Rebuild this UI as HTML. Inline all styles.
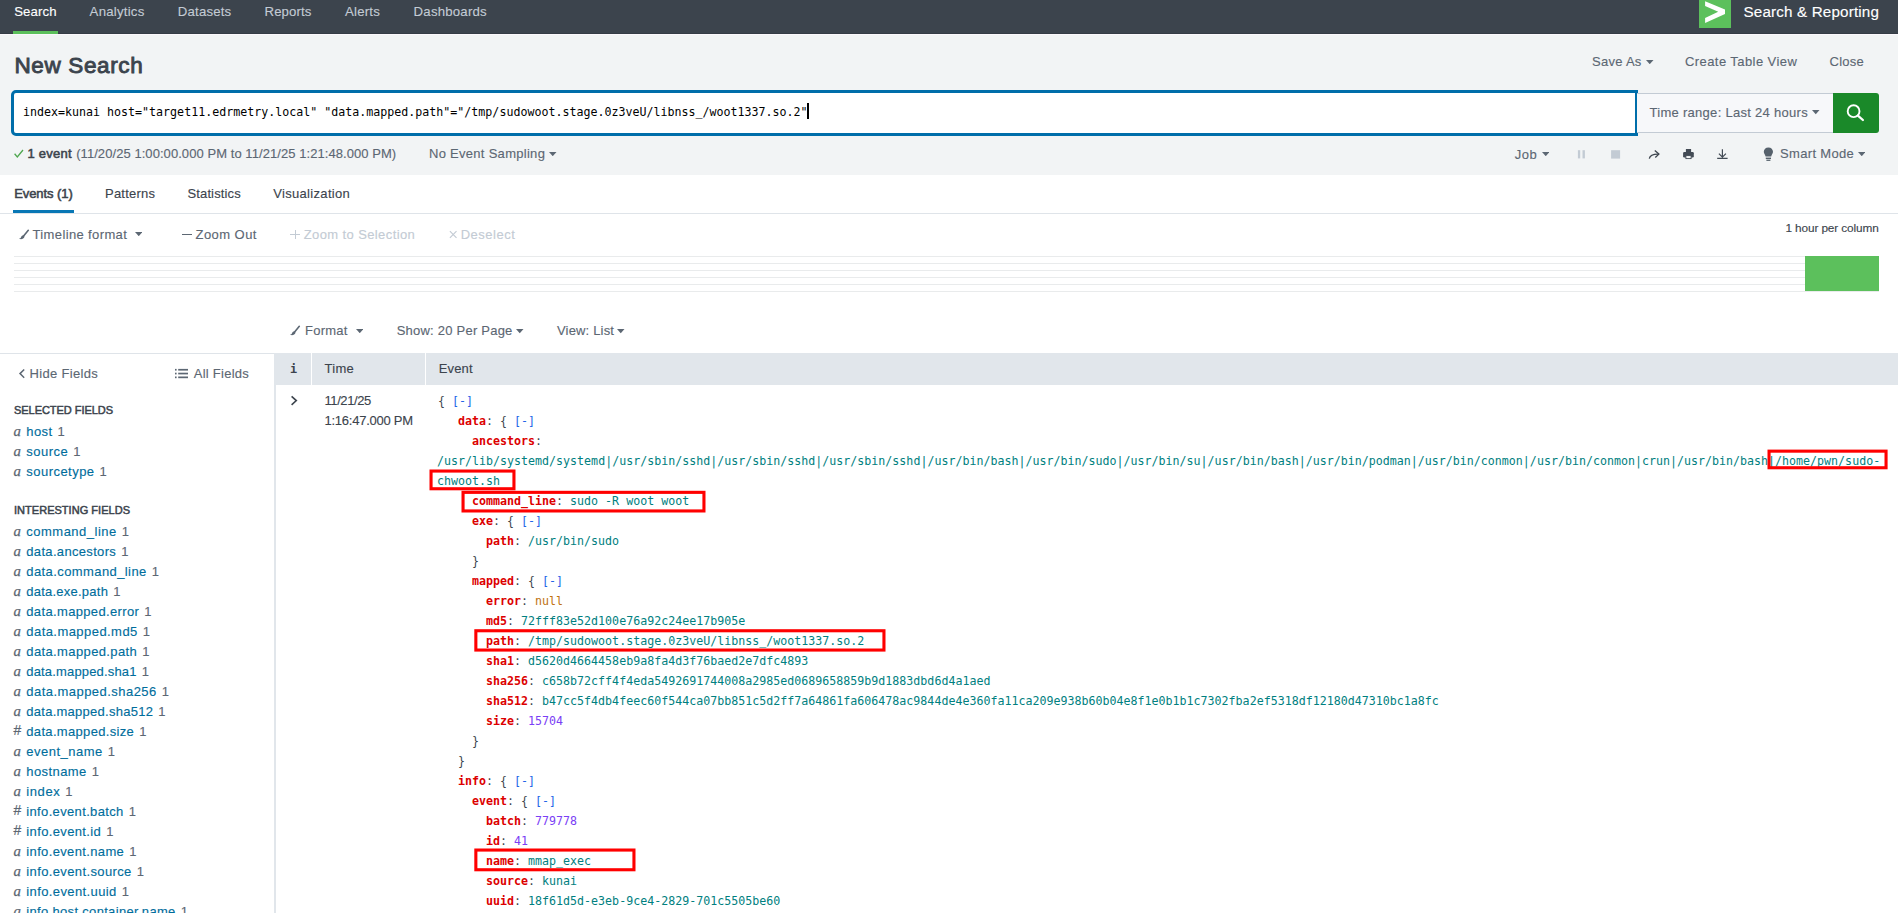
<!DOCTYPE html><html lang="en"><head><meta charset="utf-8"><title>Search | Splunk</title><style>
html,body{margin:0;padding:0}
body{width:1898px;height:913px;overflow:hidden;background:#fff;position:relative;font-family:"Liberation Sans",sans-serif}
.t{position:absolute;white-space:pre;line-height:20px}
.s{font-family:"Liberation Sans",sans-serif;-webkit-text-stroke:0.13px}
.m{font-family:"DejaVu Sans Mono","Liberation Mono",monospace;transform:scaleX(0.9093);transform-origin:0 0}
.f{font-family:"Liberation Serif",serif}
.j{position:absolute;white-space:pre;line-height:20px;font-family:"DejaVu Sans Mono","Liberation Mono",monospace;font-size:12.8px;transform:scaleX(0.9093);transform-origin:0 0}
</style></head><body>
<div style="position:absolute;left:0px;top:0px;width:1898px;height:34px;background:#3c444d"></div>
<div style="position:absolute;left:0px;top:33px;width:1898px;height:1px;background:#353c45"></div>
<div style="position:absolute;left:13px;top:31px;width:45px;height:3px;background:#5cc05c"></div>
<div style="position:absolute;left:1699px;top:0px;width:32px;height:28px;background:#5cc05c"></div>
<svg style="position:absolute;left:1699px;top:0" width="32" height="28"><polygon fill="#fff" points="6.1,1.2 26,9.5 26,14.1 6.1,23 6.1,18.1 19.2,11.8 6.1,6.1"/></svg>
<div style="position:absolute;left:0px;top:34px;width:1898px;height:141px;background:#f2f4f5"></div>
<div style="position:absolute;left:0px;top:34px;width:1898px;height:1px;background:#fbf8fc"></div>
<svg style="position:absolute;left:1646px;top:60.2px" width="7.5" height="4.2"><polygon fill="#5c6773" points="0,0 7.5,0 3.75,4.2"/></svg>
<div style="position:absolute;left:11px;top:90px;width:1627px;height:46px;box-sizing:border-box;border:3px solid #006eaa;border-radius:5px 0 0 5px;background:#fff"></div>
<div style="position:absolute;left:807px;top:103px;width:1.5px;height:16px;background:#000"></div>
<div style="position:absolute;left:1637px;top:93px;width:197px;height:40px;box-sizing:border-box;border:1px solid #c3cbd4;border-left:none;background:#f7f8fa"></div>
<svg style="position:absolute;left:1812px;top:110.4px" width="7.5" height="4.2"><polygon fill="#5c6773" points="0,0 7.5,0 3.75,4.2"/></svg>
<div style="position:absolute;left:1833px;top:93px;width:46.2px;height:40px;background:#1a8929;border-radius:0 3px 3px 0"></div>
<svg style="position:absolute;left:1833px;top:93px" width="47" height="40"><circle cx="20.6" cy="18.2" r="5.9" fill="none" stroke="#fff" stroke-width="1.9"/><path d="M24.9 22.6 L29.9 27" stroke="#fff" stroke-width="2.3" stroke-linecap="round"/></svg>
<svg style="position:absolute;left:14px;top:148px" width="10" height="10"><path d="M0.6 5.8 L3.3 8.9 L9 2" fill="none" stroke="#4fa74f" stroke-width="1.3"/></svg>
<svg style="position:absolute;left:549px;top:151.7px" width="7.5" height="4.2"><polygon fill="#5c6773" points="0,0 7.5,0 3.75,4.2"/></svg>
<svg style="position:absolute;left:1541.5px;top:152.2px" width="7.5" height="4.2"><polygon fill="#5c6773" points="0,0 7.5,0 3.75,4.2"/></svg>
<svg style="position:absolute;left:1577px;top:149px" width="10" height="11"><rect x="0.9" y="1.2" width="2.3" height="8.2" fill="#c3cbd4"/><rect x="5.5" y="1.2" width="2.4" height="8.2" fill="#c3cbd4"/></svg>
<svg style="position:absolute;left:1610px;top:149px" width="12" height="11"><rect x="1.1" y="1.2" width="9" height="8.4" fill="#c3cbd4"/></svg>
<svg style="position:absolute;left:1648px;top:147px" width="14" height="14"><path d="M1.3 11.6 C1.9 8.6 4.2 7 10.4 7.1" fill="none" stroke="#3c444d" stroke-width="1.3"/><path d="M6.8 3.5 L10.9 7.1 L7.3 10.5" fill="none" stroke="#3c444d" stroke-width="1.3"/></svg>
<svg style="position:absolute;left:1683px;top:148px" width="12" height="12"><rect x="2.9" y="1" width="5.2" height="3.4" fill="#434b55"/><rect x="0.1" y="4" width="10.7" height="5.4" rx="1.2" fill="#434b55"/><rect x="2.9" y="7.6" width="5.2" height="3" fill="#f2f4f5" stroke="#434b55" stroke-width="0.9"/></svg>
<svg style="position:absolute;left:1716px;top:148px" width="14" height="13"><path d="M6.4 1.2 V9 M2.9 5.7 L6.4 9.2 L9.9 5.7 M1.2 10.4 H11.6" fill="none" stroke="#434b55" stroke-width="1.2"/></svg>
<svg style="position:absolute;left:1763px;top:147px" width="11" height="15"><path d="M5.4 0.5 C8.2 0.5 10 2.5 10 4.8 C10 6.6 8.6 7.6 8.2 9.6 H2.6 C2.2 7.6 0.8 6.6 0.8 4.8 C0.8 2.5 2.6 0.5 5.4 0.5 Z" fill="#56616c"/><rect x="2.8" y="10.6" width="5.2" height="1.4" fill="#56616c"/><rect x="3.4" y="12.6" width="4" height="1.3" fill="#56616c"/></svg>
<svg style="position:absolute;left:1857.7px;top:151.9px" width="7.5" height="4.2"><polygon fill="#5c6773" points="0,0 7.5,0 3.75,4.2"/></svg>
<div style="position:absolute;left:0px;top:213px;width:1898px;height:1px;background:#dfe4e9"></div>
<div style="position:absolute;left:13px;top:210px;width:61px;height:3px;background:#0877b5"></div>
<svg style="position:absolute;left:18px;top:229px" width="12" height="11"><path d="M10.3 1.3 L5.6 6.9" stroke="#5c6773" stroke-width="1.6" stroke-linecap="round"/><path d="M6.1 6.7 C4.8 5.9 3.4 6.7 3.1 7.9 C2.8 9 2 9.5 0.9 9.7 C2.7 10.5 5 10.3 6 8.8 C6.5 8.1 6.5 7.3 6.1 6.7 Z" fill="#5c6773"/></svg>
<svg style="position:absolute;left:134.7px;top:232px" width="7.5" height="4.2"><polygon fill="#5c6773" points="0,0 7.5,0 3.75,4.2"/></svg>
<div style="position:absolute;left:182px;top:234px;width:9.6px;height:1px;background:#5c6773"></div>
<div style="position:absolute;left:290px;top:234px;width:10px;height:1px;background:#c3cbd4"></div>
<div style="position:absolute;left:295px;top:230px;width:1px;height:9px;background:#c3cbd4"></div>
<svg style="position:absolute;left:449px;top:230px" width="9" height="9"><path d="M0.9 1.2 L7.5 7.8 M7.5 1.2 L0.9 7.8" stroke="#c3cbd4" stroke-width="1.15"/></svg>
<div style="position:absolute;left:14px;top:256px;width:1865px;height:1px;background:#e9ebec"></div>
<div style="position:absolute;left:14px;top:263px;width:1865px;height:1px;background:#e9ebec"></div>
<div style="position:absolute;left:14px;top:270px;width:1865px;height:1px;background:#e9ebec"></div>
<div style="position:absolute;left:14px;top:277px;width:1865px;height:1px;background:#e9ebec"></div>
<div style="position:absolute;left:14px;top:284px;width:1865px;height:1px;background:#e9ebec"></div>
<div style="position:absolute;left:14px;top:291px;width:1865px;height:1px;background:#e9ebec"></div>
<div style="position:absolute;left:1805px;top:256px;width:74px;height:35px;background:#5cc05c"></div>
<svg style="position:absolute;left:289px;top:325px" width="12" height="11"><path d="M10.3 1.3 L5.6 6.9" stroke="#5c6773" stroke-width="1.6" stroke-linecap="round"/><path d="M6.1 6.7 C4.8 5.9 3.4 6.7 3.1 7.9 C2.8 9 2 9.5 0.9 9.7 C2.7 10.5 5 10.3 6 8.8 C6.5 8.1 6.5 7.3 6.1 6.7 Z" fill="#5c6773"/></svg>
<svg style="position:absolute;left:355.5px;top:328.7px" width="7.5" height="4.2"><polygon fill="#5c6773" points="0,0 7.5,0 3.75,4.2"/></svg>
<svg style="position:absolute;left:516px;top:329.4px" width="7.5" height="4.2"><polygon fill="#5c6773" points="0,0 7.5,0 3.75,4.2"/></svg>
<svg style="position:absolute;left:617px;top:329.4px" width="7.5" height="4.2"><polygon fill="#5c6773" points="0,0 7.5,0 3.75,4.2"/></svg>
<div style="position:absolute;left:0px;top:353px;width:275px;height:1px;background:#dfe4e9"></div>
<div style="position:absolute;left:274px;top:353px;width:2px;height:560px;background:#e1e6eb"></div>
<svg style="position:absolute;left:18px;top:368px" width="8" height="11"><path d="M6.2 1.5 L2 5.6 L6.2 9.7" fill="none" stroke="#5c6773" stroke-width="1.5"/></svg>
<svg style="position:absolute;left:175px;top:368px" width="14" height="11"><g fill="#5c6773"><rect x="0" y="0.9" width="1.6" height="1.7"/><rect x="3.2" y="0.9" width="9.8" height="1.7"/><rect x="0" y="4.7" width="1.6" height="1.7"/><rect x="3.2" y="4.7" width="9.8" height="1.7"/><rect x="0" y="8.5" width="1.6" height="1.7"/><rect x="3.2" y="8.5" width="9.8" height="1.7"/></g></svg>
<div style="position:absolute;left:276px;top:353px;width:1622px;height:32px;background:#e1e6eb"></div>
<div style="position:absolute;left:311px;top:353px;width:1px;height:32px;background:#fff"></div>
<div style="position:absolute;left:425px;top:353px;width:1px;height:32px;background:#fff"></div>
<svg style="position:absolute;left:290px;top:395px" width="9" height="11"><path d="M1.6 1.4 L6.3 5.6 L1.6 9.8" fill="none" stroke="#3c444d" stroke-width="1.6"/></svg>
<div class="j" style="left:437.5px;top:391.00px"><span style="color:#3c444d">{ </span><span style="color:#2265e8">[-]</span></div>
<div class="j" style="left:458px;top:411.00px"><span style="color:#dc0000;font-weight:700">data</span><span style="color:#3c444d">: { </span><span style="color:#2265e8">[-]</span></div>
<div class="j" style="left:472px;top:431.00px"><span style="color:#dc0000;font-weight:700">ancestors</span><span style="color:#3c444d">:</span></div>
<div class="j" style="left:437.3px;top:451.00px"><span style="color:#008080">/usr/lib/systemd/systemd|/usr/sbin/sshd|/usr/sbin/sshd|/usr/sbin/sshd|/usr/bin/bash|/usr/bin/sudo|/usr/bin/su|/usr/bin/bash|/usr/bin/podman|/usr/bin/conmon|/usr/bin/conmon|crun|/usr/bin/bash|/home/pwn/sudo-</span></div>
<div class="j" style="left:437.3px;top:471.00px"><span style="color:#008080">chwoot.sh</span></div>
<div class="j" style="left:472px;top:491.00px"><span style="color:#dc0000;font-weight:700">command_line</span><span style="color:#3c444d">: </span><span style="color:#008080">sudo -R woot woot</span></div>
<div class="j" style="left:472px;top:511.00px"><span style="color:#dc0000;font-weight:700">exe</span><span style="color:#3c444d">: { </span><span style="color:#2265e8">[-]</span></div>
<div class="j" style="left:486px;top:531.00px"><span style="color:#dc0000;font-weight:700">path</span><span style="color:#3c444d">: </span><span style="color:#008080">/usr/bin/sudo</span></div>
<div class="j" style="left:472px;top:551.00px"><span style="color:#3c444d">}</span></div>
<div class="j" style="left:472px;top:571.00px"><span style="color:#dc0000;font-weight:700">mapped</span><span style="color:#3c444d">: { </span><span style="color:#2265e8">[-]</span></div>
<div class="j" style="left:486px;top:591.00px"><span style="color:#dc0000;font-weight:700">error</span><span style="color:#3c444d">: </span><span style="color:#c0720f">null</span></div>
<div class="j" style="left:486px;top:611.00px"><span style="color:#dc0000;font-weight:700">md5</span><span style="color:#3c444d">: </span><span style="color:#008080">72fff83e52d100e76a92c24ee17b905e</span></div>
<div class="j" style="left:486px;top:631.00px"><span style="color:#dc0000;font-weight:700">path</span><span style="color:#3c444d">: </span><span style="color:#008080">/tmp/sudowoot.stage.0z3veU/libnss_/woot1337.so.2</span></div>
<div class="j" style="left:486px;top:651.00px"><span style="color:#dc0000;font-weight:700">sha1</span><span style="color:#3c444d">: </span><span style="color:#008080">d5620d4664458eb9a8fa4d3f76baed2e7dfc4893</span></div>
<div class="j" style="left:486px;top:671.00px"><span style="color:#dc0000;font-weight:700">sha256</span><span style="color:#3c444d">: </span><span style="color:#008080">c658b72cff4f4eda5492691744008a2985ed0689658859b9d1883dbd6d4a1aed</span></div>
<div class="j" style="left:486px;top:691.00px"><span style="color:#dc0000;font-weight:700">sha512</span><span style="color:#3c444d">: </span><span style="color:#008080">b47cc5f4db4feec60f544ca07bb851c5d2ff7a64861fa606478ac9844de4e360fa11ca209e938b60b04e8f1e0b1b1c7302fba2ef5318df12180d47310bc1a8fc</span></div>
<div class="j" style="left:486px;top:711.00px"><span style="color:#dc0000;font-weight:700">size</span><span style="color:#3c444d">: </span><span style="color:#7a40f5">15704</span></div>
<div class="j" style="left:472px;top:731.00px"><span style="color:#3c444d">}</span></div>
<div class="j" style="left:458px;top:751.00px"><span style="color:#3c444d">}</span></div>
<div class="j" style="left:458px;top:771.00px"><span style="color:#dc0000;font-weight:700">info</span><span style="color:#3c444d">: { </span><span style="color:#2265e8">[-]</span></div>
<div class="j" style="left:472px;top:791.00px"><span style="color:#dc0000;font-weight:700">event</span><span style="color:#3c444d">: { </span><span style="color:#2265e8">[-]</span></div>
<div class="j" style="left:486px;top:811.00px"><span style="color:#dc0000;font-weight:700">batch</span><span style="color:#3c444d">: </span><span style="color:#7a40f5">779778</span></div>
<div class="j" style="left:486px;top:831.00px"><span style="color:#dc0000;font-weight:700">id</span><span style="color:#3c444d">: </span><span style="color:#7a40f5">41</span></div>
<div class="j" style="left:486px;top:851.00px"><span style="color:#dc0000;font-weight:700">name</span><span style="color:#3c444d">: </span><span style="color:#008080">mmap_exec</span></div>
<div class="j" style="left:486px;top:871.00px"><span style="color:#dc0000;font-weight:700">source</span><span style="color:#3c444d">: </span><span style="color:#008080">kunai</span></div>
<div class="j" style="left:486px;top:891.00px"><span style="color:#dc0000;font-weight:700">uuid</span><span style="color:#3c444d">: </span><span style="color:#008080">18f61d5d-e3eb-9ce4-2829-701c5505be60</span></div>
<svg style="position:absolute;left:0;top:0;overflow:visible" width="1898" height="913"><rect x="1769.05" y="451.15" width="117" height="16.6" fill="none" stroke="#ff0000" stroke-width="3.1"/></svg>
<svg style="position:absolute;left:0;top:0;overflow:visible" width="1898" height="913"><rect x="431.05" y="471.05" width="82.9" height="17.7" fill="none" stroke="#ff0000" stroke-width="3.1"/></svg>
<svg style="position:absolute;left:0;top:0;overflow:visible" width="1898" height="913"><rect x="463.05" y="492.35" width="240.9" height="18.6" fill="none" stroke="#ff0000" stroke-width="3.1"/></svg>
<svg style="position:absolute;left:0;top:0;overflow:visible" width="1898" height="913"><rect x="475.85" y="630.75" width="408.1" height="19.3" fill="none" stroke="#ff0000" stroke-width="3.1"/></svg>
<svg style="position:absolute;left:0;top:0;overflow:visible" width="1898" height="913"><rect x="475.85" y="850.05" width="158.1" height="19.7" fill="none" stroke="#ff0000" stroke-width="3.1"/></svg>
<span class="t s" style="left:14.2px;top:1.83px;font-size:13.2px;color:#ffffff;letter-spacing:0.110px">Search</span>
<span class="t s" style="left:89.6px;top:1.83px;font-size:13.2px;color:#c3cbd4;letter-spacing:0.238px">Analytics</span>
<span class="t s" style="left:177.8px;top:1.83px;font-size:13.2px;color:#c3cbd4;letter-spacing:0.194px">Datasets</span>
<span class="t s" style="left:264.5px;top:1.83px;font-size:13.2px;color:#c3cbd4;letter-spacing:0.110px">Reports</span>
<span class="t s" style="left:345.1px;top:1.83px;font-size:13.2px;color:#c3cbd4;letter-spacing:0.197px">Alerts</span>
<span class="t s" style="left:413.6px;top:1.83px;font-size:13.2px;color:#c3cbd4;letter-spacing:0.220px">Dashboards</span>
<span class="t s" style="left:1743.5px;top:1.73px;font-size:15.2px;color:#ffffff;letter-spacing:0.169px">Search &amp; Reporting</span>
<span class="t s" style="left:14.5px;top:56.00px;font-size:22.5px;color:#3c444d;letter-spacing:0.625px;-webkit-text-stroke:0.9px #3c444d">New Search</span>
<span class="t s" style="left:1592px;top:52.10px;font-size:13px;color:#5c6773;letter-spacing:0.276px">Save As</span>
<span class="t s" style="left:1685px;top:52.10px;font-size:13px;color:#5c6773;letter-spacing:0.422px">Create Table View</span>
<span class="t s" style="left:1829.5px;top:52.10px;font-size:13px;color:#5c6773;letter-spacing:0.278px">Close</span>
<span class="t m" style="left:23px;top:102.00px;font-size:12.8px;color:#000000">index=kunai host=&quot;target11.edrmetry.local&quot; &quot;data.mapped.path&quot;=&quot;/tmp/sudowoot.stage.0z3veU/libnss_/woot1337.so.2&quot;</span>
<span class="t s" style="left:1649.5px;top:102.50px;font-size:13px;color:#5c6773;letter-spacing:0.287px">Time range: Last 24 hours</span>
<span class="t s" style="left:27.5px;top:143.50px;font-size:13px;color:#3c444d;letter-spacing:0.238px;-webkit-text-stroke:0.55px">1 event</span>
<span class="t s" style="left:76.2px;top:143.50px;font-size:13px;color:#5c6773;letter-spacing:0.062px">(11/20/25 1:00:00.000 PM to 11/21/25 1:21:48.000 PM)</span>
<span class="t s" style="left:429px;top:143.50px;font-size:13px;color:#5c6773;letter-spacing:0.286px">No Event Sampling</span>
<span class="t s" style="left:1514.7px;top:144.90px;font-size:13px;color:#5c6773;letter-spacing:0.533px">Job</span>
<span class="t s" style="left:1780px;top:143.70px;font-size:13px;color:#5c6773;letter-spacing:0.336px">Smart Mode</span>
<span class="t s" style="left:14.2px;top:183.80px;font-size:13px;color:#3c444d;letter-spacing:-0.079px;-webkit-text-stroke:0.55px">Events (1)</span>
<span class="t s" style="left:105px;top:183.80px;font-size:13px;color:#3c444d;letter-spacing:0.210px">Patterns</span>
<span class="t s" style="left:187.5px;top:183.80px;font-size:13px;color:#3c444d;letter-spacing:0.125px">Statistics</span>
<span class="t s" style="left:273.2px;top:183.80px;font-size:13px;color:#3c444d;letter-spacing:0.323px">Visualization</span>
<span class="t s" style="left:32.5px;top:224.70px;font-size:13px;color:#5c6773;letter-spacing:0.372px">Timeline format</span>
<span class="t s" style="left:195.5px;top:224.70px;font-size:13px;color:#5c6773;letter-spacing:0.454px">Zoom Out</span>
<span class="t s" style="left:303.7px;top:224.70px;font-size:13px;color:#c3cbd4;letter-spacing:0.395px">Zoom to Selection</span>
<span class="t s" style="left:460.7px;top:224.70px;font-size:13px;color:#c3cbd4;letter-spacing:0.496px">Deselect</span>
<span class="t s" style="left:1785.4px;top:217.51px;font-size:11.8px;color:#3c444d;letter-spacing:-0.103px">1 hour per column</span>
<span class="t s" style="left:305px;top:320.70px;font-size:13px;color:#5c6773;letter-spacing:0.241px">Format</span>
<span class="t s" style="left:396.7px;top:320.70px;font-size:13px;color:#5c6773;letter-spacing:0.228px">Show: 20 Per Page</span>
<span class="t s" style="left:557px;top:320.70px;font-size:13px;color:#5c6773;letter-spacing:0.168px">View: List</span>
<span class="t s" style="left:29.5px;top:363.70px;font-size:13px;color:#5c6773;letter-spacing:0.330px">Hide Fields</span>
<span class="t s" style="left:193.7px;top:363.70px;font-size:13px;color:#5c6773;letter-spacing:0.268px">All Fields</span>
<span class="t s" style="left:14px;top:400.19px;font-size:11px;color:#3c444d;letter-spacing:-0.044px;-webkit-text-stroke:0.5px">SELECTED FIELDS</span>
<span class="t s" style="left:14px;top:500.19px;font-size:11px;color:#3c444d;letter-spacing:0.027px;-webkit-text-stroke:0.5px">INTERESTING FIELDS</span>
<span class="t f" style="left:13.6px;top:421.00px;font-size:14.8px;color:#5c6773;font-style:italic;-webkit-text-stroke:0.25px">a</span>
<span class="t s" style="left:26.3px;top:421.50px;font-size:13px;color:#006d9c;letter-spacing:0.406px">host</span>
<span class="t s" style="left:57.6px;top:421.50px;font-size:13px;color:#5c6773">1</span>
<span class="t f" style="left:13.6px;top:441.00px;font-size:14.8px;color:#5c6773;font-style:italic;-webkit-text-stroke:0.25px">a</span>
<span class="t s" style="left:26.3px;top:441.50px;font-size:13px;color:#006d9c;letter-spacing:0.485px">source</span>
<span class="t s" style="left:73.3px;top:441.50px;font-size:13px;color:#5c6773">1</span>
<span class="t f" style="left:13.6px;top:461.00px;font-size:14.8px;color:#5c6773;font-style:italic;-webkit-text-stroke:0.25px">a</span>
<span class="t s" style="left:26.3px;top:461.50px;font-size:13px;color:#006d9c;letter-spacing:0.464px">sourcetype</span>
<span class="t s" style="left:99.6px;top:461.50px;font-size:13px;color:#5c6773">1</span>
<span class="t f" style="left:13.6px;top:521.00px;font-size:14.8px;color:#5c6773;font-style:italic;-webkit-text-stroke:0.25px">a</span>
<span class="t s" style="left:26.3px;top:521.50px;font-size:13px;color:#006d9c;letter-spacing:0.492px">command_line</span>
<span class="t s" style="left:121.8px;top:521.50px;font-size:13px;color:#5c6773">1</span>
<span class="t f" style="left:13.6px;top:541.00px;font-size:14.8px;color:#5c6773;font-style:italic;-webkit-text-stroke:0.25px">a</span>
<span class="t s" style="left:26.3px;top:541.50px;font-size:13px;color:#006d9c;letter-spacing:0.327px">data.ancestors</span>
<span class="t s" style="left:121.3px;top:541.50px;font-size:13px;color:#5c6773">1</span>
<span class="t f" style="left:13.6px;top:561.00px;font-size:14.8px;color:#5c6773;font-style:italic;-webkit-text-stroke:0.25px">a</span>
<span class="t s" style="left:26.3px;top:561.50px;font-size:13px;color:#006d9c;letter-spacing:0.408px">data.command_line</span>
<span class="t s" style="left:151.8px;top:561.50px;font-size:13px;color:#5c6773">1</span>
<span class="t f" style="left:13.6px;top:581.00px;font-size:14.8px;color:#5c6773;font-style:italic;-webkit-text-stroke:0.25px">a</span>
<span class="t s" style="left:26.3px;top:581.50px;font-size:13px;color:#006d9c;letter-spacing:0.232px">data.exe.path</span>
<span class="t s" style="left:113.3px;top:581.50px;font-size:13px;color:#5c6773">1</span>
<span class="t f" style="left:13.6px;top:601.00px;font-size:14.8px;color:#5c6773;font-style:italic;-webkit-text-stroke:0.25px">a</span>
<span class="t s" style="left:26.3px;top:601.50px;font-size:13px;color:#006d9c;letter-spacing:0.348px">data.mapped.error</span>
<span class="t s" style="left:144.3px;top:601.50px;font-size:13px;color:#5c6773">1</span>
<span class="t f" style="left:13.6px;top:621.00px;font-size:14.8px;color:#5c6773;font-style:italic;-webkit-text-stroke:0.25px">a</span>
<span class="t s" style="left:26.3px;top:621.50px;font-size:13px;color:#006d9c;letter-spacing:0.442px">data.mapped.md5</span>
<span class="t s" style="left:142.8px;top:621.50px;font-size:13px;color:#5c6773">1</span>
<span class="t f" style="left:13.6px;top:641.00px;font-size:14.8px;color:#5c6773;font-style:italic;-webkit-text-stroke:0.25px">a</span>
<span class="t s" style="left:26.3px;top:641.50px;font-size:13px;color:#006d9c;letter-spacing:0.380px">data.mapped.path</span>
<span class="t s" style="left:142.3px;top:641.50px;font-size:13px;color:#5c6773">1</span>
<span class="t f" style="left:13.6px;top:661.00px;font-size:14.8px;color:#5c6773;font-style:italic;-webkit-text-stroke:0.25px">a</span>
<span class="t s" style="left:26.3px;top:661.50px;font-size:13px;color:#006d9c;letter-spacing:0.161px">data.mapped.sha1</span>
<span class="t s" style="left:141.8px;top:661.50px;font-size:13px;color:#5c6773">1</span>
<span class="t f" style="left:13.6px;top:681.00px;font-size:14.8px;color:#5c6773;font-style:italic;-webkit-text-stroke:0.25px">a</span>
<span class="t s" style="left:26.3px;top:681.50px;font-size:13px;color:#006d9c;letter-spacing:0.460px">data.mapped.sha256</span>
<span class="t s" style="left:161.8px;top:681.50px;font-size:13px;color:#5c6773">1</span>
<span class="t f" style="left:13.6px;top:701.00px;font-size:14.8px;color:#5c6773;font-style:italic;-webkit-text-stroke:0.25px">a</span>
<span class="t s" style="left:26.3px;top:701.50px;font-size:13px;color:#006d9c;letter-spacing:0.260px">data.mapped.sha512</span>
<span class="t s" style="left:158.3px;top:701.50px;font-size:13px;color:#5c6773">1</span>
<span class="t s" style="left:13.5px;top:721.22px;font-size:13.8px;color:#5c6773;-webkit-text-stroke:0.2px">#</span>
<span class="t s" style="left:26.3px;top:721.50px;font-size:13px;color:#006d9c;letter-spacing:0.327px">data.mapped.size</span>
<span class="t s" style="left:139.3px;top:721.50px;font-size:13px;color:#5c6773">1</span>
<span class="t f" style="left:13.6px;top:741.00px;font-size:14.8px;color:#5c6773;font-style:italic;-webkit-text-stroke:0.25px">a</span>
<span class="t s" style="left:26.3px;top:741.50px;font-size:13px;color:#006d9c;letter-spacing:0.488px">event_name</span>
<span class="t s" style="left:107.8px;top:741.50px;font-size:13px;color:#5c6773">1</span>
<span class="t f" style="left:13.6px;top:761.00px;font-size:14.8px;color:#5c6773;font-style:italic;-webkit-text-stroke:0.25px">a</span>
<span class="t s" style="left:26.3px;top:761.50px;font-size:13px;color:#006d9c;letter-spacing:0.414px">hostname</span>
<span class="t s" style="left:91.8px;top:761.50px;font-size:13px;color:#5c6773">1</span>
<span class="t f" style="left:13.6px;top:781.00px;font-size:14.8px;color:#5c6773;font-style:italic;-webkit-text-stroke:0.25px">a</span>
<span class="t s" style="left:26.3px;top:781.50px;font-size:13px;color:#006d9c;letter-spacing:0.583px">index</span>
<span class="t s" style="left:65.3px;top:781.50px;font-size:13px;color:#5c6773">1</span>
<span class="t s" style="left:13.5px;top:801.22px;font-size:13.8px;color:#5c6773;-webkit-text-stroke:0.2px">#</span>
<span class="t s" style="left:26.3px;top:801.50px;font-size:13px;color:#006d9c;letter-spacing:0.349px">info.event.batch</span>
<span class="t s" style="left:128.8px;top:801.50px;font-size:13px;color:#5c6773">1</span>
<span class="t s" style="left:13.5px;top:821.22px;font-size:13.8px;color:#5c6773;-webkit-text-stroke:0.2px">#</span>
<span class="t s" style="left:26.3px;top:821.50px;font-size:13px;color:#006d9c;letter-spacing:0.367px">info.event.id</span>
<span class="t s" style="left:106.3px;top:821.50px;font-size:13px;color:#5c6773">1</span>
<span class="t f" style="left:13.6px;top:841.00px;font-size:14.8px;color:#5c6773;font-style:italic;-webkit-text-stroke:0.25px">a</span>
<span class="t s" style="left:26.3px;top:841.50px;font-size:13px;color:#006d9c;letter-spacing:0.358px">info.event.name</span>
<span class="t s" style="left:129.3px;top:841.50px;font-size:13px;color:#5c6773">1</span>
<span class="t f" style="left:13.6px;top:861.00px;font-size:14.8px;color:#5c6773;font-style:italic;-webkit-text-stroke:0.25px">a</span>
<span class="t s" style="left:26.3px;top:861.50px;font-size:13px;color:#006d9c;letter-spacing:0.375px">info.event.source</span>
<span class="t s" style="left:136.8px;top:861.50px;font-size:13px;color:#5c6773">1</span>
<span class="t f" style="left:13.6px;top:881.00px;font-size:14.8px;color:#5c6773;font-style:italic;-webkit-text-stroke:0.25px">a</span>
<span class="t s" style="left:26.3px;top:881.50px;font-size:13px;color:#006d9c;letter-spacing:0.388px">info.event.uuid</span>
<span class="t s" style="left:121.8px;top:881.50px;font-size:13px;color:#5c6773">1</span>
<span class="t f" style="left:13.6px;top:901.00px;font-size:14.8px;color:#5c6773;font-style:italic;-webkit-text-stroke:0.25px">a</span>
<span class="t s" style="left:26.3px;top:901.50px;font-size:13px;color:#006d9c;letter-spacing:0.321px">info.host.container.name</span>
<span class="t s" style="left:180.8px;top:901.50px;font-size:13px;color:#5c6773">1</span>
<span class="t m" style="left:290px;top:358.93px;font-size:13px;color:#3c444d;font-weight:700">i</span>
<span class="t s" style="left:324.5px;top:358.80px;font-size:13px;color:#3c444d;letter-spacing:0.312px">Time</span>
<span class="t s" style="left:438.7px;top:358.80px;font-size:13px;color:#3c444d;letter-spacing:0.167px">Event</span>
<span class="t s" style="left:324.5px;top:390.80px;font-size:13px;color:#3c444d;letter-spacing:-0.419px">11/21/25</span>
<span class="t s" style="left:324.5px;top:410.80px;font-size:13px;color:#3c444d;letter-spacing:-0.244px">1:16:47.000 PM</span>
</body></html>
